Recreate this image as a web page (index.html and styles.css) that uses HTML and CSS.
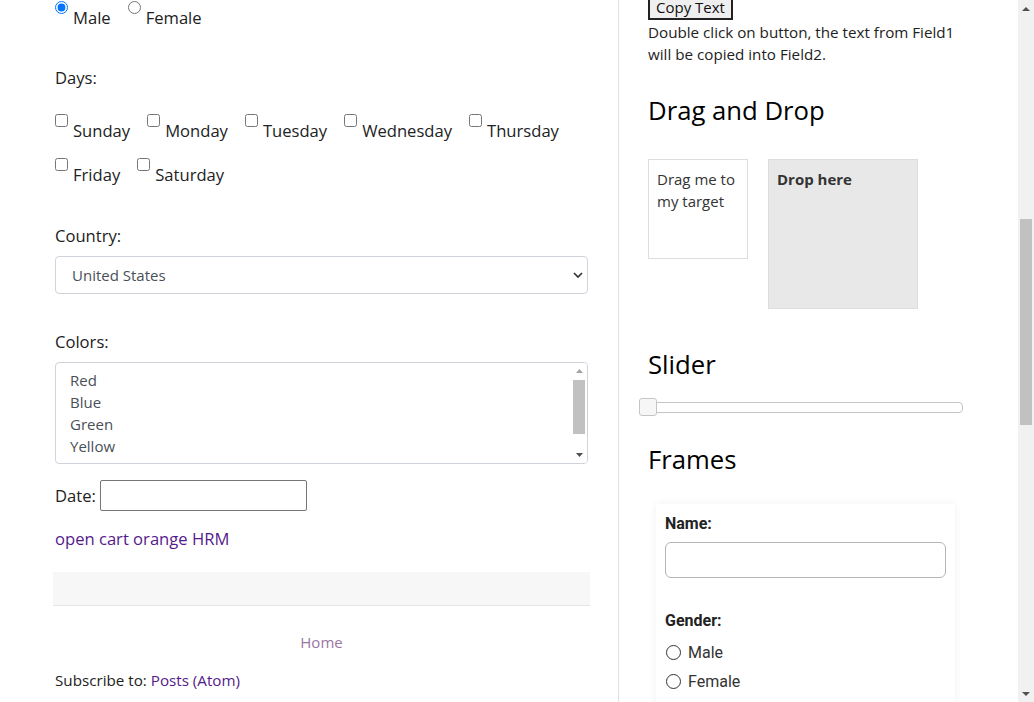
FILE: index.html
```html
<!DOCTYPE html>
<html lang="en">
<head>
<meta charset="utf-8">
<title>Automation Testing Practice</title>
<link rel="stylesheet" href="styles.css">
</head>
<body>
<div class="window">
  <div class="page">
    <section class="main-col">
      <div class="choice-row">
        <label class="choice"><input type="radio" name="gender" checked><span class="choice-text">Male</span></label>
        <label class="choice"><input type="radio" name="gender"><span class="choice-text">Female</span></label>
      </div>

      <p class="field-label days-label">Days:</p>
      <div class="choice-row days">
        <label class="choice"><input type="checkbox"><span class="choice-text">Sunday</span></label>
        <label class="choice"><input type="checkbox"><span class="choice-text">Monday</span></label>
        <label class="choice"><input type="checkbox"><span class="choice-text">Tuesday</span></label>
        <label class="choice"><input type="checkbox"><span class="choice-text">Wednesday</span></label>
        <label class="choice"><input type="checkbox"><span class="choice-text">Thursday</span></label>
        <label class="choice"><input type="checkbox"><span class="choice-text">Friday</span></label>
        <label class="choice"><input type="checkbox"><span class="choice-text">Saturday</span></label>
      </div>

      <p class="field-label country-label">Country:</p>
      <div class="select-wrap">
        <select class="select" aria-label="Country">
          <option>United States</option>
        </select>
        <svg class="select-chevron" width="10" height="6" viewBox="0 0 10 6" aria-hidden="true"><path d="M1 1 L5 5 L9 1" fill="none" stroke="#333" stroke-width="1.7"/></svg>
      </div>

      <p class="field-label colors-label">Colors:</p>
      <div class="listbox" role="listbox" aria-label="Colors">
        <ul class="listbox-items">
          <li>Red</li>
          <li>Blue</li>
          <li>Green</li>
          <li>Yellow</li>
          <li>White</li>
        </ul>
        <div class="mini-scroll">
          <span class="mini-arrow"><svg width="7" height="4" viewBox="0 0 7 4"><path d="M0 4 L3.5 0 L7 4 Z" fill="#a3a3a3"/></svg></span>
          <span class="mini-thumb"></span>
          <span class="spacer"></span>
          <span class="mini-arrow"><svg width="7" height="4" viewBox="0 0 7 4"><path d="M0 0 L3.5 4 L7 0 Z" fill="#505050"/></svg></span>
        </div>
      </div>

      <div class="date-row">
        <label class="date-label" for="datepicker">Date:</label>
        <input id="datepicker" class="date-input" type="text">
      </div>

      <a class="text-link hrm-link" href="#">open cart orange HRM</a>

      <div class="footer-bar"></div>
      <div class="home-row"><a class="home-link" href="#">Home</a></div>
      <p class="subscribe">Subscribe to: <a class="text-link" href="#">Posts (Atom)</a></p>
    </section>

    <div class="divider"></div>

    <aside class="side-col">
      <button class="copy-btn" type="button">Copy Text</button>
      <p class="side-text">Double click on button, the text from Field1 will be copied into Field2.</p>

      <h2 class="side-heading dnd-heading">Drag and Drop</h2>
      <div class="dnd">
        <div class="drag-box">Drag me to my target</div>
        <div class="drop-box"><strong>Drop here</strong></div>
      </div>

      <h2 class="side-heading slider-heading">Slider</h2>
      <div class="slider"><span class="slider-handle"></span></div>

      <h2 class="side-heading frames-heading">Frames</h2>
      <div class="frame-card">
        <label class="frame-label" for="frame-name">Name:</label>
        <input class="frame-input" id="frame-name" type="text">
        <p class="frame-label gender-label">Gender:</p>
        <label class="frame-radio first"><input type="radio" name="frame-gender"><span>Male</span></label>
        <label class="frame-radio"><input type="radio" name="frame-gender"><span>Female</span></label>
      </div>
    </aside>
  </div>

  <div class="page-scrollbar" aria-hidden="true">
    <span class="sb-arrow"><svg width="8" height="4" viewBox="0 0 8 4"><path d="M0 4 L4 0 L8 4 Z" fill="#505050"/></svg></span>
    <span class="sb-thumb"></span>
    <span class="sb-spacer"></span>
    <span class="sb-arrow"><svg width="8" height="4" viewBox="0 0 8 4"><path d="M0 0 L4 4 L8 0 Z" fill="#505050"/></svg></span>
  </div>
</div>
</body>
</html>
```

FILE: styles.css
```css
* { box-sizing: border-box; }

html, body {
  margin: 0;
  padding: 0;
  overflow: hidden;
  background: #fff;
}

body {
  font-family: "Open Sans", "Noto Sans", sans-serif;
  color: #222;
}

.window {
  display: flex;
  width: 1034px;
  height: 702px;
}

.page {
  display: flex;
  flex: 1;
  min-width: 0;
  overflow: hidden;
}

/* ---------- left column ---------- */
.main-col {
  flex: none;
  width: 537px;
  margin-left: 53px;
  padding: 1px 2px 0;
  font-size: 16.6px;
  line-height: 20px;
}

.choice-row {
  display: flex;
  flex-wrap: wrap;
  column-gap: 17px;
  row-gap: 17px;
}

.choice {
  display: inline-flex;
  align-items: flex-start;
}

.choice input {
  flex: none;
  width: 13px;
  height: 13px;
  margin: 0 5px 0 0;
}

.choice-text { margin-top: 7px; }

.field-label { margin: 0; }
.days-label { margin-top: 40px; }
.days { margin-top: 26px; }
.country-label { margin-top: 41px; }

.select-wrap {
  position: relative;
  margin-top: 10px;
}

.select {
  display: block;
  width: 100%;
  height: 38px;
  margin: 0;
  padding: 0 32px 0 16px;
  border: 1px solid #ced4da;
  border-radius: 4px;
  background: #fff;
  color: #495057;
  font: 15px/20px "Open Sans", sans-serif;
  -webkit-appearance: none;
  appearance: none;
}

.select-chevron {
  position: absolute;
  right: 5px;
  top: 16px;
  pointer-events: none;
}

.colors-label { margin-top: 38px; }

.listbox {
  display: flex;
  height: 102px;
  margin-top: 10px;
  border: 1px solid #ced4da;
  border-radius: 4px;
  overflow: hidden;
}

.listbox-items {
  flex: 1;
  margin: 0;
  padding: 6px 0 0 14px;
  list-style: none;
  font-size: 15px;
  line-height: 22px;
  color: #495057;
}

.mini-scroll {
  flex: none;
  width: 16px;
  display: flex;
  flex-direction: column;
  align-items: center;
  background: #fff;
}

.mini-arrow {
  display: flex;
  align-items: center;
  justify-content: center;
  width: 100%;
  height: 16px;
}

.mini-thumb {
  width: 12px;
  height: 54px;
  margin-top: 1px;
  background: #c1c1c1;
}

.spacer { flex: 1; }

.date-row {
  display: flex;
  align-items: center;
  margin-top: 16px;
}

.date-input {
  width: 207px;
  height: 31px;
  margin: 0 0 0 4px;
  padding: 1px 3px;
  border: 1px solid #767676;
  border-radius: 2px;
  font: 15px "Open Sans", sans-serif;
}

.text-link {
  color: #551a8b;
  text-decoration: none;
}

.hrm-link {
  display: block;
  margin-top: 18px;
  width: max-content;
}

.footer-bar {
  height: 34px;
  margin: 23px -2px 0;
  background: #f7f7f7;
  border-bottom: 1px solid #e6e6e6;
}

.home-row {
  margin-top: 26px;
  text-align: center;
  font-size: 15px;
  line-height: 20px;
}

.home-link {
  color: #9a76a4;
  text-decoration: none;
}

.subscribe {
  margin: 18px 0 0;
  font-size: 15.2px;
  line-height: 20px;
}

/* ---------- divider ---------- */
.divider {
  flex: none;
  width: 1px;
  margin-left: 28px;
  background: #e0e0e0;
}

/* ---------- right column ---------- */
.side-col {
  flex: none;
  width: 316px;
  margin-left: 29px;
  font-size: 15.2px;
  line-height: 22px;
}

.copy-btn {
  display: block;
  margin-top: -4px;
  padding: 1px 6px 3px;
  border: 2px solid #222;
  background: #efefef;
  color: #111;
  font: 15px/16px "Open Sans", sans-serif;
}

.side-text {
  margin: 1px 0 0;
  color: #222;
}

.side-heading {
  margin: 0;
  font-size: 25.7px;
  line-height: 32px;
  font-weight: 400;
  color: #000;
}

.dnd-heading { margin-top: 30px; }

.dnd {
  display: flex;
  align-items: flex-start;
  gap: 20px;
  margin-top: 32px;
}

.drag-box {
  width: 100px;
  height: 100px;
  padding: 8px;
  border: 1px solid #ddd;
  color: #333;
  font-size: 15px;
}

.drop-box {
  width: 150px;
  height: 150px;
  padding: 8px;
  border: 1px solid #ddd;
  background: #e8e8e8;
  color: #333;
  font-size: 15px;
}

.slider-heading { margin-top: 40px; }

.slider {
  position: relative;
  width: 315px;
  height: 11px;
  margin-top: 21px;
  border: 1px solid #c5c5c5;
  border-radius: 4px;
  background: #fff;
}

.slider-handle {
  position: absolute;
  left: -10px;
  top: -5px;
  width: 18px;
  height: 18px;
  border: 1px solid #c5c5c5;
  border-radius: 3px;
  background: #f6f6f6;
}

.frames-heading { margin-top: 31px; }

.frame-card {
  width: 299px;
  margin: 28px 0 0 8px;
  padding: 10px 10px 40px 9px;
  background: #fff;
  box-shadow: 0 0 8px rgba(0, 0, 0, 0.06);
  font-family: Roboto, "Open Sans", sans-serif;
  font-size: 16px;
  line-height: 19px;
  color: #222;
}

.frame-label {
  display: block;
  margin: 0;
  font-weight: 700;
}

.frame-input {
  display: block;
  width: 281px;
  height: 36px;
  margin-top: 9px;
  border: 1px solid #b5b5b5;
  border-radius: 6px;
}

.gender-label { margin-top: 33px; }

.frame-radio {
  display: flex;
  align-items: center;
  gap: 7px;
  margin-top: 10px;
  color: #333;
}

.frame-radio.first { margin-top: 13px; }

.frame-radio input {
  -webkit-appearance: none;
  appearance: none;
  flex: none;
  width: 15px;
  height: 15px;
  margin: 0 0 0 1px;
  border: 1.5px solid #333;
  border-radius: 50%;
  background: #fff;
}

/* ---------- page scrollbar ---------- */
.page-scrollbar {
  flex: none;
  width: 16px;
  display: flex;
  flex-direction: column;
  align-items: center;
  background: #f1f1f1;
}

.sb-arrow {
  display: flex;
  align-items: center;
  justify-content: center;
  width: 16px;
  height: 17px;
}

.sb-thumb {
  width: 12px;
  height: 206px;
  margin-top: 202px;
  background: #c1c1c1;
}

.sb-spacer { flex: 1; }
```
